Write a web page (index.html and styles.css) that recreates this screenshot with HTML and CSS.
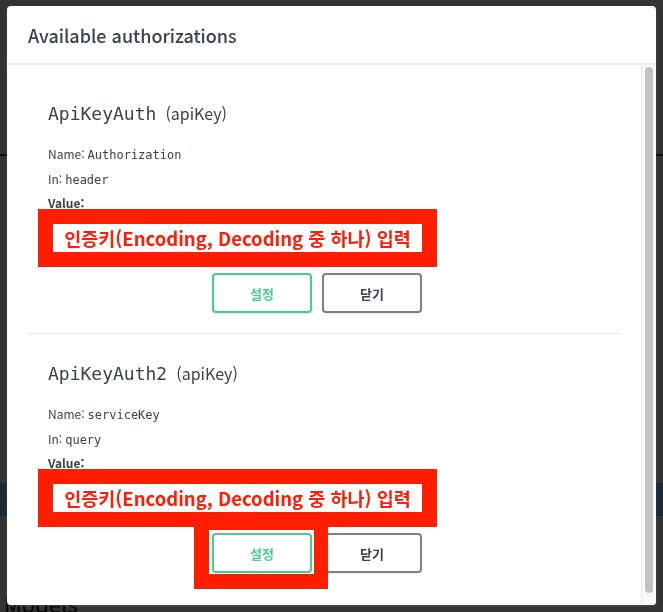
FILE: index.html
```html
<!DOCTYPE html>
<html lang="ko">
<head>
<meta charset="utf-8">
<title>Available authorizations</title>
<link rel="stylesheet" href="styles.css">
</head>
<body>
<div class="page">
  <div class="rule"></div>
  <div class="band"></div>
  <div class="models">Models</div>
</div>
<div class="backdrop"></div>
<div class="modal">
  <div class="modal-header">
    <h3 class="modal-title">Available authorizations</h3>
  </div>
  <div class="modal-body">
    <div class="modal-content">
      <div class="auth">
        <h4 class="auth-title"><code class="auth-name">ApiKeyAuth</code><span class="auth-type">(apiKey)</span></h4>
        <div class="row row-name"><span class="lbl">Name:</span><code class="val">Authorization</code></div>
        <div class="row row-in"><span class="lbl">In:</span><code class="val">header</code></div>
        <div class="row row-value"><span class="lbl-b">Value:</span></div>
        <div class="annot"><span class="annot-inner">인증키(Encoding, Decoding 중 하나) 입력</span></div>
        <div class="btns">
          <button class="btn btn-auth">설정</button>
          <button class="btn btn-close">닫기</button>
        </div>
      </div>
      <div class="auth auth-last">
        <h4 class="auth-title"><code class="auth-name">ApiKeyAuth2</code><span class="auth-type">(apiKey)</span></h4>
        <div class="row row-name"><span class="lbl">Name:</span><code class="val">serviceKey</code></div>
        <div class="row row-in"><span class="lbl">In:</span><code class="val">query</code></div>
        <div class="row row-value"><span class="lbl-b">Value:</span></div>
        <div class="annot"><span class="annot-inner">인증키(Encoding, Decoding 중 하나) 입력</span></div>
        <div class="btns">
          <button class="btn btn-auth">설정</button>
          <button class="btn btn-close">닫기</button>
          <div class="frame"></div>
        </div>
      </div>
    </div>
    <div class="scrollbar"><div class="thumb"></div></div>
  </div>
</div>
</body>
</html>
```
FILE: styles.css
```css
html, body {
  margin: 0;
  padding: 0;
}
body {
  background: #fff;
  font-family: "Noto Sans CJK KR", "Noto Sans", sans-serif;
  color: #3b4151;
  overflow: hidden;
}
.page {
  padding-top: 154px;
  height: 612px;
  box-sizing: border-box;
}
.rule {
  height: 2px;
  background: #3b4151;
}
.band {
  margin-top: 327px;
  height: 33px;
  background: #8cc8fe;
}
.models {
  margin-top: 76px;
  padding-left: 4px;
  font-size: 22px;
  line-height: 22px;
  color: #111;
}
.backdrop {
  position: fixed;
  inset: 0;
  background: rgba(0, 0, 0, 0.8);
}
.modal {
  position: fixed;
  left: 7px;
  top: 6px;
  width: 649px;
  height: 599px;
  background: #fff;
  border-radius: 4px;
  display: flex;
  flex-direction: column;
  overflow: hidden;
  box-shadow: 0 1px 2px rgba(255, 255, 255, 0.15);
}
.modal-header {
  height: 57px;
  flex: none;
  display: flex;
  align-items: center;
  padding-left: 21px;
  border-bottom: 2px solid #eeeeee;
}
.modal-title {
  margin: 0;
  font-size: 18px;
  font-weight: 500;
  color: #3b4151;
}
.modal-body {
  flex: 1;
  display: flex;
  min-height: 0;
}
.modal-content {
  flex: 1;
  padding-top: 9px;
  overflow: hidden;
}
.scrollbar {
  width: 15px;
  box-sizing: border-box;
  border-left: 1px solid #e8e8e8;
  background: #f9f9f9;
  padding: 2px 3px 0 3px;
  flex: none;
}
.thumb {
  width: 8px;
  height: 526px;
  border-radius: 4px;
  background: #c1c1c1;
}
.auth {
  margin: 0 20px 0 21px;
  padding: 27px 20px 20px;
  border-bottom: 1px solid #e8e8e8;
}
.auth-last {
  padding-bottom: 60px;
}
.auth-title {
  margin: 0;
  height: 24px;
  display: flex;
  align-items: center;
  font-weight: 400;
}
.auth-name {
  font-family: "DejaVu Sans Mono", monospace;
  font-size: 18px;
  color: #3b4151;
}
.auth-type {
  margin-left: 9px;
  font-size: 16px;
  color: #3b4151;
}
.row {
  height: 16px;
  line-height: 16px;
  font-size: 12px;
  color: #3b4151;
  white-space: pre;
}
.row-name { margin-top: 21px; }
.row-in { margin-top: 9px; }
.row-value { margin-top: 8px; }
.lbl {
  margin-right: 3px;
}
.val {
  font-family: "DejaVu Sans Mono", monospace;
  font-size: 12px;
}
.lbl-b {
  font-weight: 700;
}
.annot {
  margin-top: -2px;
  margin-left: -10px;
  width: 399px;
  height: 58px;
  box-sizing: border-box;
  border: 15px solid #ff1e00;
  background: #fff;
  display: flex;
  align-items: center;
  justify-content: center;
}
.annot-inner {
  color: #f8200a;
  font-size: 18.5px;
  font-weight: 700;
  white-space: nowrap;
}
.btns {
  position: relative;
  display: flex;
  gap: 10px;
  margin-top: 6px;
  padding-left: 164px;
}
.btn {
  width: 100px;
  height: 40px;
  box-sizing: border-box;
  border: 2px solid #808080;
  border-radius: 4px;
  background: #fff;
  font-family: "Noto Sans CJK KR", "Noto Sans", sans-serif;
  font-size: 13px;
  font-weight: 700;
  color: #3b4151;
  box-shadow: 0 1px 2px rgba(0, 0, 0, 0.1);
  padding: 0;
}
.btn-auth {
  border-color: #49cc90;
  color: #49cc90;
}
.frame {
  position: absolute;
  left: 146px;
  top: -6px;
  width: 134px;
  height: 62px;
  box-sizing: border-box;
  border-style: solid;
  border-color: #ff1e00;
  border-width: 3px 14px 15px 15px;
  pointer-events: none;
}
```
